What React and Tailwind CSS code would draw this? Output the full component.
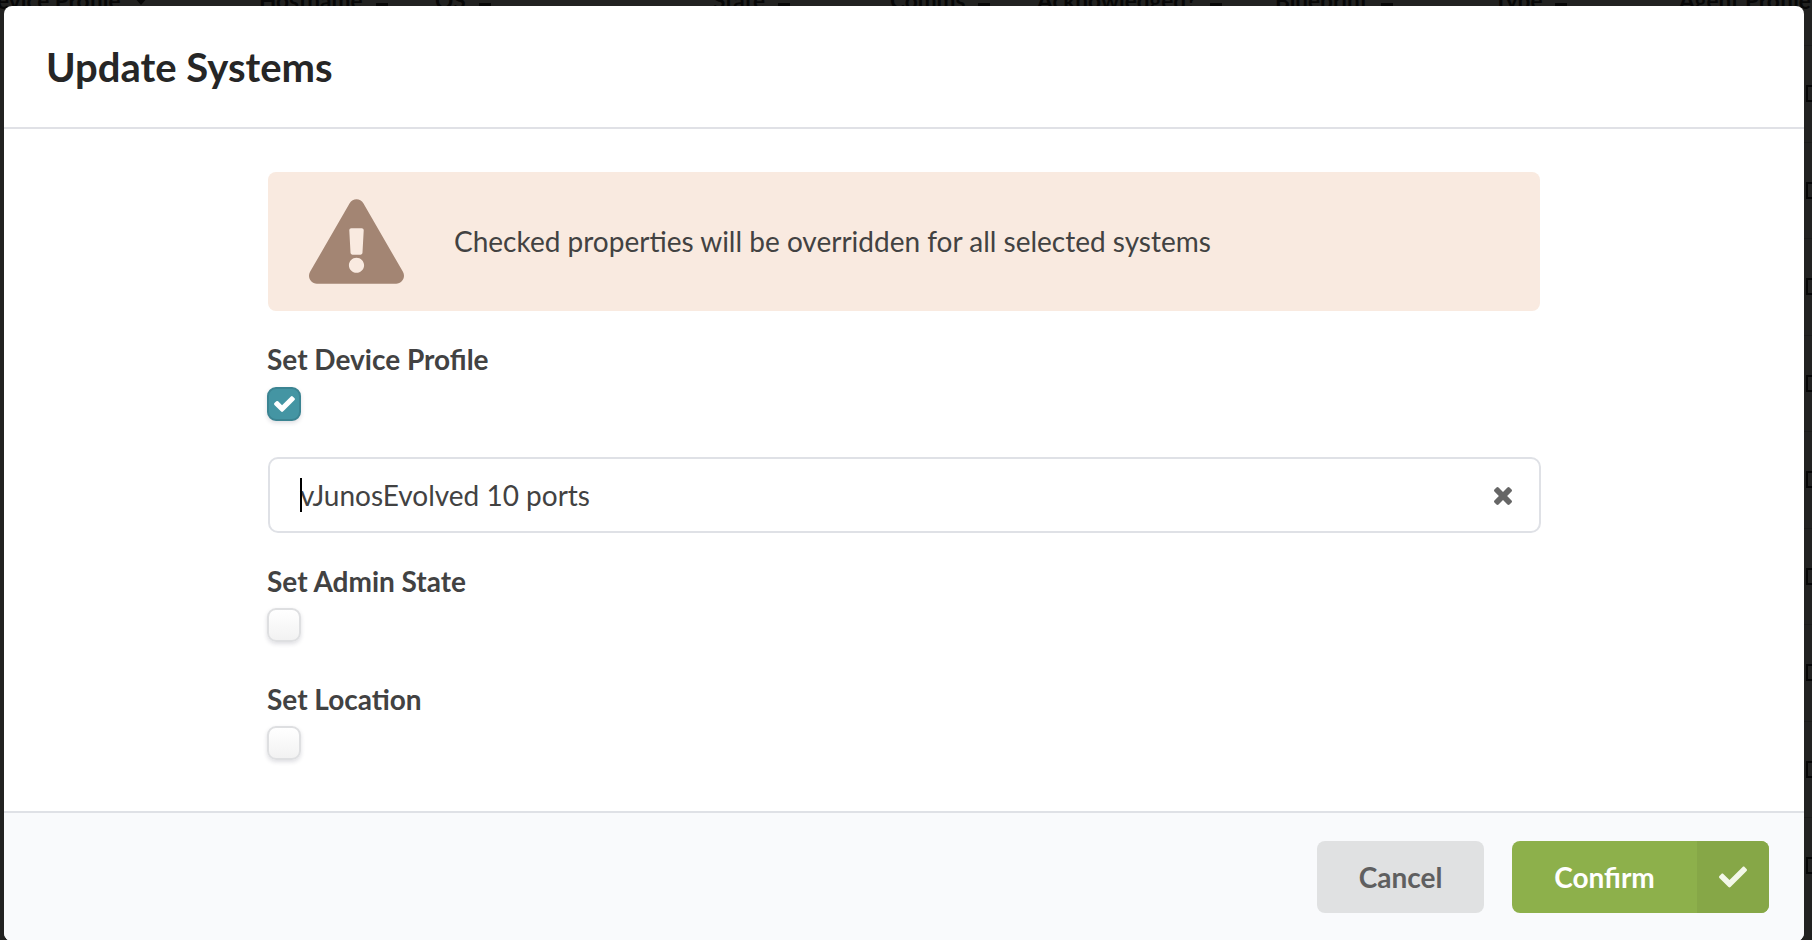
import { FaExclamationTriangle, FaCheck } from "react-icons/fa";

const COLUMNS = [
  { label: "evice Profile", left: "left-[-3px]", caret: true },
  { label: "Hostname", left: "left-[259px]" },
  { label: "OS", left: "left-[435px]" },
  { label: "State", left: "left-[713px]" },
  { label: "Comms", left: "left-[890px]" },
  { label: "Acknowledged?", left: "left-[1037px]" },
  { label: "Blueprint", left: "left-[1275px]" },
  { label: "Type", left: "left-[1494px]" },
  { label: "Agent Profile", left: "left-[1679px]" },
];

const ROWS = [0, 1, 2, 3, 4, 5, 6, 7, 8];

function Backdrop() {
  return (
    <div className="absolute inset-0 overflow-hidden bg-[#222221]">
      {COLUMNS.map((c) => (
        <div
          key={c.label}
          className={`absolute top-[-17px] flex items-center gap-[13px] text-[22.6px] leading-[36px] font-bold whitespace-nowrap text-[#070707] ${c.left}`}
        >
          <span>{c.label}</span>
          {c.caret ? (
            <svg className="h-[8px] w-[14px]" viewBox="0 0 14 8" fill="currentColor">
              <path d="M0 0h14L7 8z" />
            </svg>
          ) : (
            <span className="mt-[7px] h-[3px] w-[12px] bg-[#070707]" />
          )}
        </div>
      ))}
      <div className="absolute top-[45px] right-0 flex w-[8px] flex-col">
        {ROWS.map((r) => (
          <div key={r} className="flex h-[96.5px] items-start border-t border-[#1c1c1b] pt-[39px] pl-[2px]">
            <span className="h-[17px] w-[17px] shrink-0 border-2 border-[#060606]" />
          </div>
        ))}
      </div>
    </div>
  );
}

function CheckField({ label, checked }) {
  return (
    <div className="flex flex-col">
      <span className="text-[28px] leading-[36px] font-bold text-[#424242]">{label}</span>
      {checked ? (
        <span className="mt-[10px] flex h-[34px] w-[34px] items-center justify-center rounded-[9px] border-2 border-[#3b8492] bg-[#4495a3] shadow-[0_2px_4px_rgba(34,36,58,0.15)]">
          <svg className="h-[16px] w-[21px]" viewBox="121 334 1550 1188" fill="#fff">
            <path d="M1671 566q0 40-28 68l-724 724-136 136q-28 28-68 28t-68-28l-136-136-362-362q-28-28-28-68t28-68l136-136q28-28 68-28t68 28l294 295 656-657q28-28 68-28t68 28l136 136q28 28 28 68z" />
          </svg>
        </span>
      ) : (
        <span className="mt-[9px] h-[34px] w-[34px] rounded-[9px] border-2 border-[#dedfe1] bg-linear-to-b from-white to-[#f2f2f2] shadow-[0_2px_4px_rgba(34,36,58,0.15)]" />
      )}
    </div>
  );
}

export default function App() {
  return (
    <div className="relative h-[940px] w-[1812px] overflow-hidden font-['Lato',sans-serif]">
      <Backdrop />
      <div className="relative mt-[6px] ml-[4px] flex h-[935px] w-[1800px] flex-col overflow-hidden rounded-[8px] bg-white">
        <header className="flex h-[123px] shrink-0 items-center border-b-2 border-[#e0e1e6] px-[42px]">
          <h1 className="text-[40px] leading-[52px] font-bold text-[#262626]">Update Systems</h1>
        </header>

        <main className="flex flex-1 flex-col pt-[43px] pr-[264px] pl-[263px]">
          <div className="ml-px flex h-[139px] items-center rounded-[8px] bg-[#f9eae0] pl-[41px]">
            <FaExclamationTriangle className="h-[85px] w-[95px] text-[#a38573]" />
            <p className="ml-[50px] pb-[2px] text-[28px] text-[#424242]">
              Checked properties will be overridden for all selected systems
            </p>
          </div>

          <div className="mt-[30px]">
            <CheckField label="Set Device Profile" checked />
          </div>

          <div className="mt-[36px] ml-px flex h-[76px] w-[1273px] items-center justify-between rounded-[10px] border-2 border-[#dfe1e6] pr-[27px] pl-[30px]">
            <div className="relative text-[28px] text-[#424242]">
              <span className="absolute top-1 left-0 h-[34px] w-[2px] bg-black" />
              vJunosEvolved 10 ports
            </div>
            <svg className="mt-[2px] h-[18px] w-[18px]" viewBox="302 366 1188 1188" fill="#666">
              <path d="M1490 1322q0 40-28 68l-136 136q-28 28-68 28t-68-28l-294-294-294 294q-28 28-68 28t-68-28l-136-136q-28-28-28-68t28-68l294-294-294-294q-28-28-28-68t28-68l136-136q28-28 68-28t68 28l294 294 294-294q28-28 68-28t68 28l136 136q28 28 28 68t-28 68l-294 294 294 294q28 28 28 68z" />
            </svg>
          </div>

          <div className="mt-[30px]">
            <CheckField label="Set Admin State" />
          </div>
          <div className="mt-[39px]">
            <CheckField label="Set Location" />
          </div>
        </main>

        <footer className="flex h-[130px] shrink-0 items-start justify-end gap-[28px] border-t-2 border-[#dfe1e6] bg-[#f9fafc] pt-[28px] pr-[35px]">
          <button className="h-[72px] w-[167px] rounded-[8px] bg-[#e0e1e2] text-[28px] font-bold text-[#5f5f60]">
            Cancel
          </button>
          <button className="flex h-[72px] w-[257px] overflow-hidden rounded-[8px] bg-[#8db04b] text-[28px] font-bold text-white">
            <span className="flex h-full w-[185px] items-center justify-center">Confirm</span>
            <span className="flex h-full w-[72px] items-center justify-center bg-[#86a747]">
              <FaCheck className="h-[28px] w-[28px] text-[#f3f8e9]" />
            </span>
          </button>
        </footer>
      </div>
    </div>
  );
}
